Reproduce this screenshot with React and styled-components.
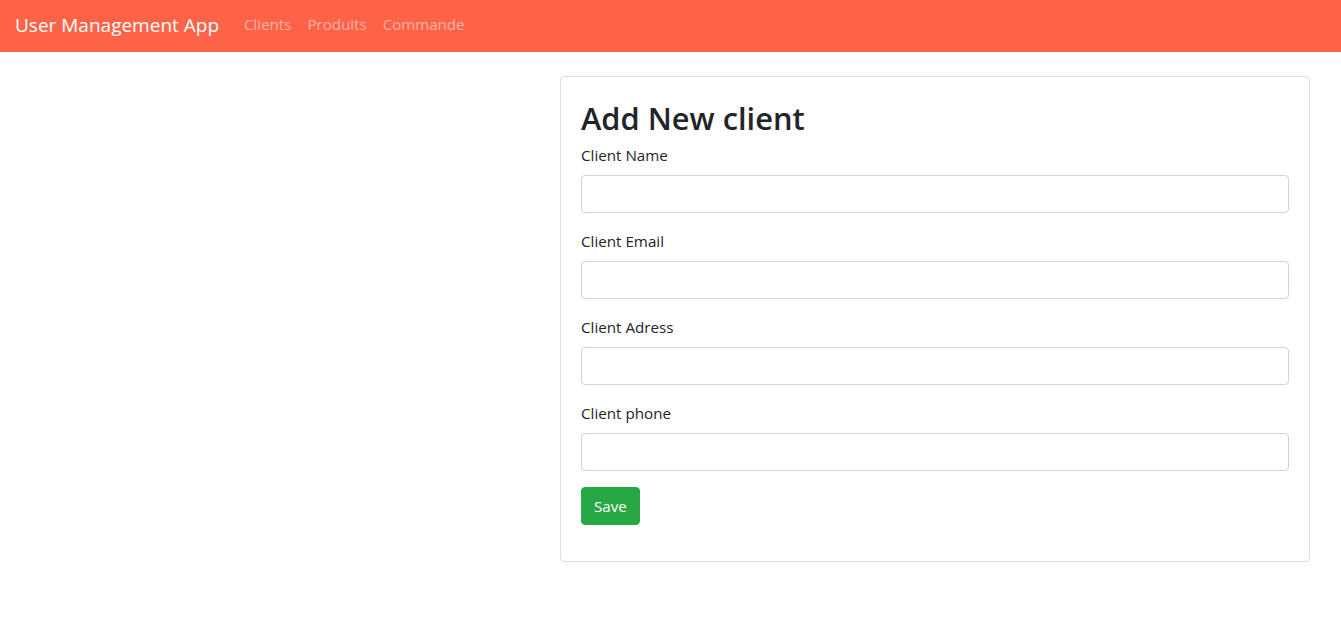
import React from "react";
import styled, { createGlobalStyle } from "styled-components";

const Global = createGlobalStyle`
  * { box-sizing: border-box; }
  body {
    margin: 0;
    font-family: "Segoe UI", "Open Sans", "Liberation Sans", sans-serif;
    font-size: 15.2px;
    line-height: 24px;
    color: #212529;
    background: #fff;
  }
`;

const Navbar = styled.nav`
  height: 52px;
  background: #ff6347;
  display: flex;
  align-items: center;
  padding: 0 16px 0 15px;
`;

const Brand = styled.a`
  font-size: 19px;
  line-height: 30px;
  color: #fff;
  margin-right: 17px;
  text-decoration: none;
  margin-top: -3px;
`;

const NavList = styled.ul`
  display: flex;
  list-style: none;
  margin: -4px 0 0;
  padding: 0;
`;

const NavLink = styled.a`
  display: block;
  padding: 0 8px;
  color: rgba(255, 255, 255, 0.5);
  text-decoration: none;
  font-size: 15.1px;
`;

const Main = styled.main`
  padding: 24px 0 0 560px;
`;

const Card = styled.div`
  width: 750px;
  border: 1px solid rgba(0, 0, 0, 0.125);
  border-radius: 4px;
  padding: 20px;
`;

const Title = styled.h2`
  margin: 0 0 6px;
  padding-top: 2px;
  font-size: 30.8px;
  font-weight: 600;
  line-height: 38.4px;
`;

const Form = styled.form`
  margin-bottom: 16px;
`;

const Group = styled.div`
  margin-bottom: 16px;
`;

const Label = styled.label`
  display: block;
  margin-bottom: 8px;
`;

const Input = styled.input`
  display: block;
  width: 100%;
  height: 38px;
  padding: 6px 12px;
  font-size: 16px;
  border: 1px solid #ced4da;
  border-radius: 4px;
  font-family: inherit;
  color: #495057;
`;

const Button = styled.button`
  background: #28a745;
  border: 1px solid #28a745;
  color: #fff;
  border-radius: 4px;
  padding: 6px 12px;
  font-size: 15.2px;
  line-height: 24px;
  font-family: inherit;
`;

const fields = ["Client Name", "Client Email", "Client Adress", "Client phone"];

export default function App() {
  return (
    <>
      <Global />
      <Navbar>
        <Brand href="#">User Management App</Brand>
        <NavList>
          <li><NavLink href="#">Clients</NavLink></li>
          <li><NavLink href="#">Produits</NavLink></li>
          <li><NavLink href="#">Commande</NavLink></li>
        </NavList>
      </Navbar>
      <Main>
        <Card>
          <Title>Add New client</Title>
          <Form onSubmit={(e) => e.preventDefault()}>
            {fields.map((f) => (
              <Group key={f}>
                <Label>{f}</Label>
                <Input type="text" />
              </Group>
            ))}
            <Button type="submit">Save</Button>
          </Form>
        </Card>
      </Main>
    </>
  );
}
